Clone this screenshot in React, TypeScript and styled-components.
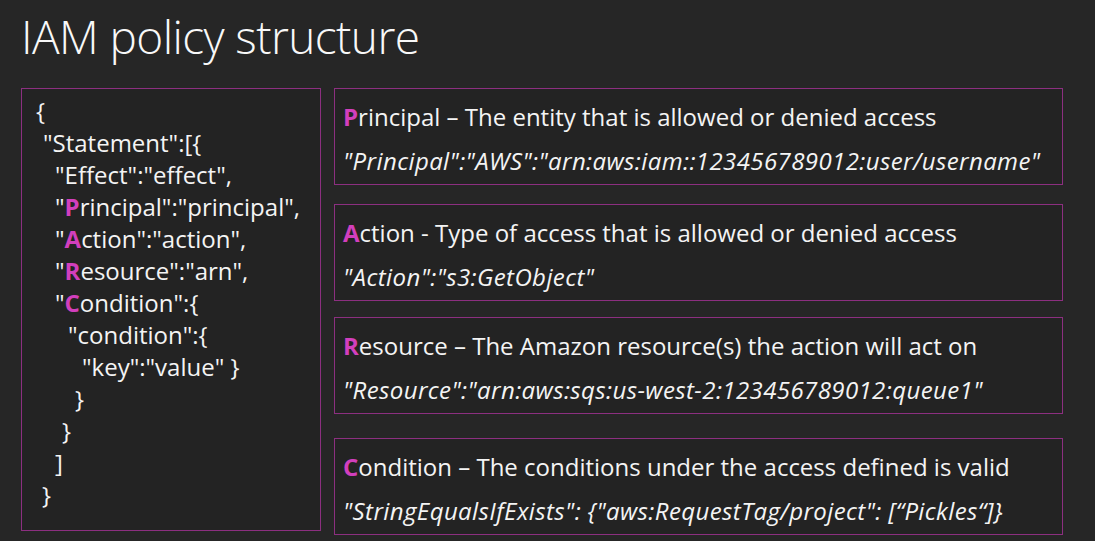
import React from "react";
import styled, { createGlobalStyle } from "styled-components";

const Global = createGlobalStyle`
  html, body { margin: 0; padding: 0; background: #262626; }
  body { width: 1095px; height: 541px; overflow: hidden; font-family: "Open Sans", "Noto Sans", sans-serif; color: #f4f4f4; }
`;

const Page = styled.div`
  width: 1095px;
  height: 541px;
  box-sizing: border-box;
  padding: 0 0 0 21px;
  display: flex;
  flex-direction: column;
`;

const Title = styled.h1`
  margin: 0;
  height: 88px;
  box-sizing: border-box;
  padding-top: 6px;
  font-weight: 300;
  font-size: 46px;
  line-height: 60px;
  color: #f8f8f8;
  letter-spacing: -0.6px;
`;

const Body = styled.div`
  display: flex;
  gap: 13px;
  align-items: flex-start;
`;

const CodeBox = styled.div`
  width: 300px;
  height: 443px;
  box-sizing: border-box;
  border: 1.5px solid #8c2f80;
  background: #232323;
  padding: 6px 0 0 14px;
  font-size: 24px;
  line-height: 32px;
`;

const Line = styled.div<{ $indent: number }>`
  padding-left: ${(p) => p.$indent}px;
  white-space: pre;
`;

const Hi = styled.span`
  color: #d23fbd;
  font-weight: 700;
`;

const Cards = styled.div`
  display: flex;
  flex-direction: column;
  width: 729px;
`;

const Card = styled.div<{ $top: number }>`
  margin-top: ${(p) => p.$top}px;
  height: 97px;
  box-sizing: border-box;
  border: 1.5px solid #8c2f80;
  background: #232323;
  padding: 12px 0 0 8px;
`;

const CardTitle = styled.div`
  font-size: 24px;
  line-height: 32px;
  white-space: nowrap;
`;

const CardCode = styled.div`
  margin-top: 12px;
  font-size: 24px;
  line-height: 32px;
  font-style: italic;
  letter-spacing: 0.4px;
  white-space: nowrap;
`;

const code: [number, React.ReactNode][] = [
  [0, "{"],
  [7, '"Statement":[{'],
  [19, '"Effect":"effect",'],
  [19, <>"<Hi>P</Hi>rincipal":"principal",</>],
  [19, <>"<Hi>A</Hi>ction":"action",</>],
  [19, <>"<Hi>R</Hi>esource":"arn",</>],
  [19, <>"<Hi>C</Hi>ondition":{"{"}</>],
  [32, '"condition":{'],
  [46, '"key":"value" }'],
  [39, "}"],
  [26, "}"],
  [19, "]"],
  [6, "}"],
];

const cards = [
  { top: 0, letter: "P", rest: "rincipal – The entity that is allowed or denied access", code: '"Principal":"AWS":"arn:aws:iam::123456789012:user/username"' },
  { top: 19, letter: "A", rest: "ction - Type of access that is allowed or denied access", code: '"Action":"s3:GetObject"' },
  { top: 16, letter: "R", rest: "esource – The Amazon resource(s) the action will act on", code: '"Resource":"arn:aws:sqs:us-west-2:123456789012:queue1"' },
  { top: 24, letter: "C", rest: "ondition – The conditions under the access defined is valid", code: '"StringEqualsIfExists": {"aws:RequestTag/project": [“Pickles“]}' },
];

export default function App() {
  return (
    <>
      <Global />
      <Page>
        <Title>IAM policy structure</Title>
        <Body>
          <CodeBox>
            {code.map(([indent, text], i) => (
              <Line key={i} $indent={indent}>{text}</Line>
            ))}
          </CodeBox>
          <Cards>
            {cards.map((c) => (
              <Card key={c.letter} $top={c.top}>
                <CardTitle><Hi>{c.letter}</Hi>{c.rest}</CardTitle>
                <CardCode>{c.code}</CardCode>
              </Card>
            ))}
          </Cards>
        </Body>
      </Page>
    </>
  );
}
